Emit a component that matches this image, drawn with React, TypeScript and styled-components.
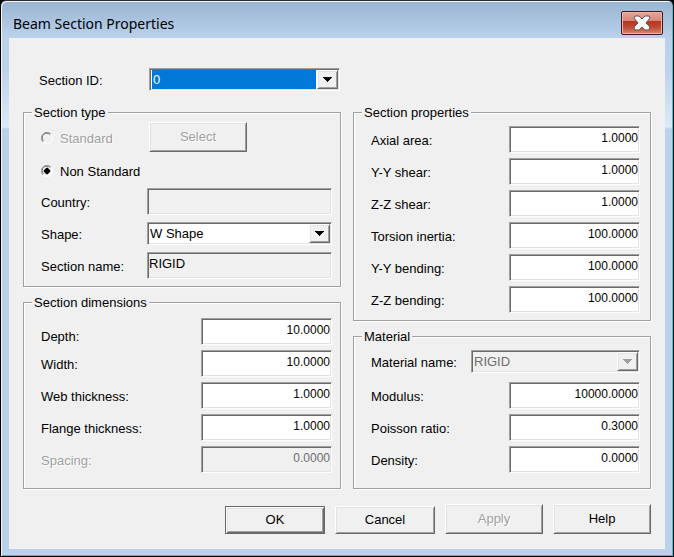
import React from "react";
import styled, { createGlobalStyle, css } from "styled-components";

const Global = createGlobalStyle`
  * { box-sizing: border-box; }
  html, body, #root { height: 100%; margin: 0; }
  body { background: #000; font: 13px/15px "Liberation Sans", Arial, sans-serif; color: #000; }
  button, input, select { font: inherit; color: inherit; margin: 0; border-radius: 0; }
`;

const sunken = css`
  border: 1px solid;
  border-color: #a0a0a0 #fff #fff #a0a0a0;
  box-shadow: inset 1px 1px #696969, inset -1px -1px #e3e3e3;
`;

const raised = css`
  border: 1px solid;
  border-color: #fff #696969 #696969 #fff;
  box-shadow: inset 1px 1px #e3e3e3, inset -1px -1px #a0a0a0;
`;

const Window = styled.main`
  display: flex;
  flex-direction: column;
  min-height: 100vh;
  padding: 0 7px 7px;
  border: 1px solid #000;
  border-top-color: #2b2b33;
  border-radius: 6px 6px 0 0;
  background: linear-gradient(#99b4d1 0, #b9d1ea 36px, #bdd3ec 70px, #dce9f8 126px, #b9d1ea 128px);
  box-shadow: inset 1px 1px #f4f8fc, inset -1px -1px #35c3dc;
`;

const TitleBar = styled.header`
  display: flex;
  align-items: center;
  justify-content: space-between;
  height: 37px;
  padding: 0 3px 0 5px;
`;

const Title = styled.h1`
  margin: 8px 0 0;
  font: 400 14px/20px "Noto Sans", sans-serif;
`;

const CloseButton = styled.button`
  display: grid;
  place-items: center;
  width: 42px;
  height: 24px;
  margin-top: 7px;
  padding: 0;
  border: 1px solid #431422;
  border-radius: 2px;
  box-shadow: inset 0 0 0 1px #ecb5a9;
  background: linear-gradient(#e5a699, #d58676 42%, #b8351f 43%, #c14c33 70%, #d98873);
`;

const Client = styled.form`
  display: flex;
  flex: 1;
  flex-direction: column;
  margin: 0 1px;
  padding: 30px 14px 15px;
  background: #f0f0f0;
`;

const SectionPicker = styled.div`
  display: grid;
  grid-template-columns: 110px 191px;
  align-items: center;
  padding-left: 16px;
  margin-bottom: 14px;
`;

const Columns = styled.div`
  display: grid;
  grid-template-columns: 318fr 298fr;
  gap: 12px;
`;

const Column = styled.div`
  display: flex;
  flex-direction: column;
  gap: 8px;
`;

const Group = styled.fieldset<{ $end: number; $side: number }>`
  min-width: 0;
  margin: 0;
  padding: 0 ${(p) => p.$side}px ${(p) => p.$end}px 17px;
  border: 1px solid #a0a0a0;
  box-shadow: 1px 1px #fff, inset 1px 1px #fff;
`;

const Legend = styled.legend`
  margin-left: -9px;
  padding: 0 2px;
  background: #f0f0f0;
`;

const Rows = styled.div<{ $gap: number; $top: number }>`
  display: flex;
  flex-direction: column;
  gap: ${(p) => p.$gap}px;
  padding-top: ${(p) => p.$top}px;
`;

const Row = styled.div<{ $field: number; $low?: boolean; $tail?: number }>`
  display: grid;
  grid-template-columns: 1fr ${(p) => p.$field}px;
  align-items: ${(p) => (p.$low ? "end" : "center")};
  margin-bottom: ${(p) => p.$tail ?? 0}px;
`;

const Label = styled.label<{ $off?: boolean }>`
  padding-top: 2px;
  line-height: 16px;
  white-space: nowrap;
  ${(p) => p.$off && css`color: #a0a0a0; text-shadow: 1px 1px #fff;`}
`;

const TextBox = styled.input<{ $numeric?: boolean }>`
  ${sunken}
  width: 100%;
  min-width: 0;
  height: 27px;
  padding: 0 1px 4px;
  background: #fff;
  ${(p) => p.$numeric && css`font-size: 12px; text-align: right;`}
  &:read-only { background: #f0f0f0; }
  &:disabled { background: #f0f0f0; color: #6d6d6d; }
`;

const Combo = styled.div<{ $off?: boolean }>`
  ${sunken}
  display: grid;
  grid-template-columns: 1fr 21px;
  height: 23px;
  padding: 1px;
  background: ${(p) => (p.$off ? "#f0f0f0" : "#fff")};
`;

const Select = styled.select<{ $selected?: boolean }>`
  appearance: none;
  grid-area: 1 / 1;
  min-width: 0;
  margin: ${(p) => (p.$selected ? "0 1px" : "0")};
  padding: 0 1px;
  border: 0;
  outline: 0;
  background: ${(p) => (p.$selected ? "#0078d7" : "transparent")};
  color: ${(p) => (p.$selected ? "#fff" : "#000")};
  &:disabled { color: #6d6d6d; opacity: 1; }
`;

const Arrow = styled.span<{ $off?: boolean }>`
  ${raised}
  display: grid;
  place-items: center;
  background: #f0f0f0;
  color: ${(p) => (p.$off ? "#a0a0a0" : "#000")};
  pointer-events: none;
`;

const TypeRow = styled.div<{ $height: number }>`
  display: grid;
  grid-template-columns: 108px 98px;
  align-items: center;
  height: ${(p) => p.$height}px;
`;

const RadioLabel = styled.label<{ $off?: boolean }>`
  display: flex;
  align-items: center;
  gap: 7px;
  padding-top: 2px;
  white-space: nowrap;
  ${(p) => p.$off && css`color: #a0a0a0; text-shadow: 1px 1px #fff;`}
`;

const RadioFace = styled.span`
  position: relative;
  display: grid;
  flex: none;
  width: 12px;
  height: 12px;
  svg { grid-area: 1 / 1; pointer-events: none; }
`;

const Radio = styled.input`
  appearance: none;
  grid-area: 1 / 1;
  width: 12px;
  height: 12px;
  border-radius: 50%;
`;

const Button = styled.button<{ $tall?: boolean; $primary?: boolean }>`
  ${raised}
  width: ${(p) => (p.$tall ? 98 : 100)}px;
  height: ${(p) => (p.$tall ? 30 : 28)}px;
  padding: 0 0 2px;
  background: #f0f0f0;
  ${(p) => p.$primary && css`
    border-color: #696969;
    box-shadow: inset 1px 1px #fff, inset -1px -1px #696969, inset 2px 2px #e3e3e3, inset -2px -2px #a0a0a0;
  `}
  &:disabled { color: #a0a0a0; text-shadow: 1px 1px #fff; }
`;

const Actions = styled.footer`
  display: flex;
  justify-content: flex-end;
  align-items: flex-end;
  gap: 10px;
  margin-top: auto;
`;

type PickerProps = { id: string; value: string; selected?: boolean; disabled?: boolean };

const Picker = ({ id, value, selected, disabled }: PickerProps) => (
  <Combo $off={disabled}>
    <Select id={id} defaultValue={value} $selected={selected} disabled={disabled}>
      <option>{value}</option>
    </Select>
    <Arrow $off={disabled}>
      <svg width="9" height="5" viewBox="0 0 9 5" fill="currentColor" shapeRendering="crispEdges">
        <path d="M0 0h9v1H8v1H7v1H6v1H5v1H4V4H3V3H2V2H1V1H0z" />
      </svg>
    </Arrow>
  </Combo>
);

type TypeRadioProps = { value: string; checked?: boolean; disabled?: boolean };

const TypeRadio = ({ value, checked, disabled }: TypeRadioProps) => (
  <RadioFace>
    <Radio type="radio" name="type" value={value} defaultChecked={checked} disabled={disabled} />
    <svg width="12" height="12" viewBox="0 0 12 12" fill="none">
      <circle cx="6" cy="6" r="5" fill={disabled ? "#f0f0f0" : "#fff"} />
      <path d="M2 10A5.5 5.5 0 0 1 10 2" stroke="#a0a0a0" />
      <path d="M10 2A5.5 5.5 0 0 1 2 10" stroke="#fff" />
      <path d="M2.5 9A4.5 4.5 0 0 1 9 2.5" stroke="#696969" />
      {checked && <path d="M5 3h2v1h1v1h1v2H8v1H7v1H5V8H4V7H3V5h1V4h1z" fill="#000" stroke="#000" strokeWidth="0.5" />}
    </svg>
  </RadioFace>
);

type NumberRowProps = { id: string; label: string; value: string; disabled?: boolean; low?: boolean; };

const NumberRow = ({ id, label, value, disabled, low }: NumberRowProps) => (
  <Row $field={131} $low={low}>
    <Label htmlFor={id} $off={disabled}>{label}</Label>
    <TextBox id={id} $numeric defaultValue={value} disabled={disabled} />
  </Row>
);

export default function App() {
  return (
    <>
      <Global />
      <Window>
        <TitleBar>
          <Title>Beam Section Properties</Title>
          <CloseButton type="button" aria-label="Close">
            <svg width="18" height="16" viewBox="0 0 18 16">
              <path d="M2 1h4l3 3 3-3h4l1 2-4 5 4 4-1 3h-4l-3-3-3 3H2l-1-3 4-4-4-5z" fill="#f7f7f7" stroke="#5b545c" strokeLinejoin="round" />
            </svg>
          </CloseButton>
        </TitleBar>
        <Client onSubmit={(e) => e.preventDefault()}>
          <SectionPicker>
            <Label htmlFor="section-id">Section ID:</Label>
            <Picker id="section-id" value="0" selected />
          </SectionPicker>
          <Columns>
            <Column>
              <Group $end={7} $side={8}>
                <Legend>Section type</Legend>
                <Rows $gap={7} $top={2}>
                  <TypeRow $height={30}>
                    <RadioLabel $off>
                      <TypeRadio value="standard" disabled />
                      Standard
                    </RadioLabel>
                    <Button type="button" $tall disabled>Select</Button>
                  </TypeRow>
                  <TypeRow $height={22}>
                    <RadioLabel>
                      <TypeRadio value="non-standard" checked />
                      Non Standard
                    </RadioLabel>
                  </TypeRow>
                  <Row $field={185}>
                    <Label htmlFor="country">Country:</Label>
                    <TextBox id="country" readOnly />
                  </Row>
                  <Row $field={185}>
                    <Label htmlFor="shape">Shape:</Label>
                    <Picker id="shape" value="W Shape" />
                  </Row>
                  <Row $field={185}>
                    <Label htmlFor="section-name">Section name:</Label>
                    <TextBox id="section-name" readOnly defaultValue="RIGID" />
                  </Row>
                </Rows>
              </Group>
              <Group $end={15} $side={8}>
                <Legend>Section dimensions</Legend>
                <Rows $gap={5} $top={8}>
                  <NumberRow id="depth" label="Depth:" value="10.0000" low />
                  <NumberRow id="width" label="Width:" value="10.0000" />
                  <NumberRow id="web" label="Web thickness:" value="1.0000" />
                  <NumberRow id="flange" label="Flange thickness:" value="1.0000" />
                  <NumberRow id="spacing" label="Spacing:" value="0.0000" disabled />
                </Rows>
              </Group>
            </Column>
            <Column>
              <Group $end={7} $side={10}>
                <Legend>Section properties</Legend>
                <Rows $gap={5} $top={6}>
                  <NumberRow id="axial" label="Axial area:" value="1.0000" />
                  <NumberRow id="yy-shear" label="Y-Y shear:" value="1.0000" />
                  <NumberRow id="zz-shear" label="Z-Z shear:" value="1.0000" />
                  <NumberRow id="torsion" label="Torsion inertia:" value="100.0000" />
                  <NumberRow id="yy-bending" label="Y-Y bending:" value="100.0000" />
                  <NumberRow id="zz-bending" label="Z-Z bending:" value="100.0000" />
                </Rows>
              </Group>
              <Group $end={15} $side={10}>
                <Legend>Material</Legend>
                <Rows $gap={5} $top={6}>
                  <Row $field={169} $tail={4}>
                    <Label htmlFor="material">Material name:</Label>
                    <Picker id="material" value="RIGID" disabled />
                  </Row>
                  <NumberRow id="modulus" label="Modulus:" value="10000.0000" />
                  <NumberRow id="poisson" label="Poisson ratio:" value="0.3000" />
                  <NumberRow id="density" label="Density:" value="0.0000" />
                </Rows>
              </Group>
            </Column>
          </Columns>
          <Actions>
            <Button type="submit" $primary>OK</Button>
            <Button type="button">Cancel</Button>
            <Button type="button" $tall disabled>Apply</Button>
            <Button type="button" $tall>Help</Button>
          </Actions>
        </Client>
      </Window>
    </>
  );
}
